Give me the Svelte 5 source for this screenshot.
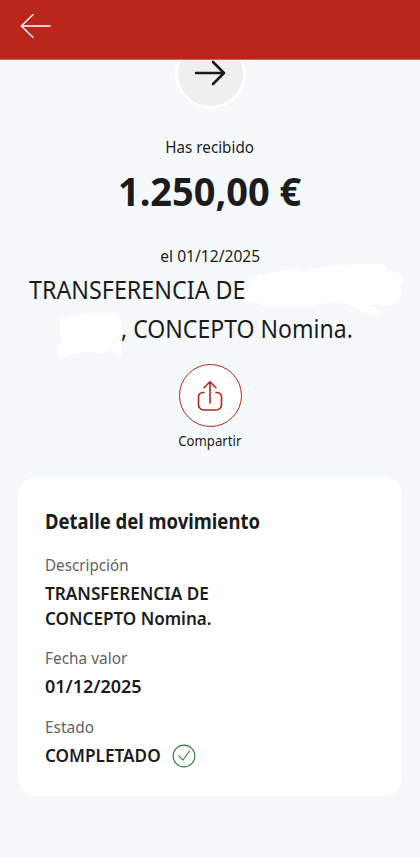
<script>
  const details = [
    { label: 'Descripción', labelScale: 0.95, lines: [{ text: 'TRANSFERENCIA DE', scale: 0.953 }, { text: 'CONCEPTO Nomina.', scale: 0.948 }] },
    { label: 'Fecha valor', labelScale: 0.963, lines: [{ text: '01/12/2025', scale: 0.998 }] },
    { label: 'Estado', labelScale: 0.963, lines: [{ text: 'COMPLETADO', scale: 0.953 }], done: true }
  ];
</script>

<div class="screen">
  <header>
    <button class="back" aria-label="Volver">
      <svg width="32" height="26" viewBox="0 0 32 26" fill="none" stroke="#fff" stroke-width="1.4" stroke-linecap="round" stroke-linejoin="round">
        <path d="M30 13H1.5M12.9 1.8 1.3 13l11.6 11.2" />
      </svg>
    </button>
  </header>

  <main>
    <div class="badge-clip">
      <div class="badge">
        <svg width="32" height="26" viewBox="0 0 32 26" fill="none" stroke="#1c1c1c" stroke-width="2.6" stroke-linecap="round" stroke-linejoin="round">
          <path d="M2 13h28M19 2 30 13 19 24" />
        </svg>
      </div>
    </div>

    <p class="small received"><span>Has recibido</span></p>
    <p class="amount"><span>1.250,00 €</span></p>
    <p class="small date"><span>el 01/12/2025</span></p>

    <div class="concept">
      <p class="first"><span>TRANSFERENCIA DE</span></p>
      <p class="second"><span>, CONCEPTO Nomina.</span></p>
      <svg class="scribble" width="420" height="100" viewBox="0 260 420 100" fill="#fff">
        <path d="M249 284Q251 278 256 279Q258 272 262 275C275 272 287 269 297 269Q300 273 310 270C330 265 350 264 382 264Q388 266 387 270Q399 271 403 278Q405 281 400 286Q403 294 400 299Q397 305 380 305L370 305Q378 310 383 312Q384 315 375 315Q362 313 356 308Q349 303 331 302Q316 304 312 307Q302 306 298 307C285 307 272 308 262 306Q260 302 249 302Q245 293 249 284Z" />
        <path d="M59 319Q63 315 66 318Q74 314 94 313Q111 312 117 315Q122 316 122 325L122 338Q122 350 121 355Q117 357 111 350Q104 354 96 353Q91 351 86 352L73 354Q64 359 58 357Q57 353 61 339Z" />
      </svg>
    </div>

    <button class="share">
      <i class="circle">
        <svg width="26" height="32" viewBox="0 0 26 32" fill="none" stroke="#b92419" stroke-width="1.6" stroke-linecap="round" stroke-linejoin="round">
          <path d="M13 23V2M7 7.7 13 1.7l6 6M7 12.5H6A4.8 4.8 0 0 0 1.5 17v7A5.5 5.5 0 0 0 7 30h12a5.5 5.5 0 0 0 5.5-6v-7A4.8 4.8 0 0 0 20 12.5h-1" />
        </svg>
      </i>
      <b><span>Compartir</span></b>
    </button>

    <section class="card">
      <h2><span>Detalle del movimiento</span></h2>
      {#each details as item}
        <div class="item">
          <p class="label"><span style:transform="scaleX({item.labelScale})">{item.label}</span></p>
          {#each item.lines as line}
            <p class="value"><span style:transform="scaleX({line.scale})">{line.text}</span></p>
          {/each}
          {#if item.done}
            <svg class="check" width="24" height="24" viewBox="0 0 24 24" fill="none" stroke="#32803f" stroke-width="1.1" stroke-linecap="round" stroke-linejoin="round">
              <circle cx="12" cy="12" r="10.9" />
              <path d="m6.8 11.8 4.2 4.4 6.3-9" />
            </svg>
          {/if}
        </div>
      {/each}
    </section>
  </main>
</div>

<style>
  :global(body) { margin: 0; background: #f5f9fc; }
  .screen {
    height: 857px;
    overflow: hidden;
    background: #f5f9fc;
    color: #1c1c1c;
    font-family: "Noto Sans", sans-serif;
  }
  header { height: 60px; background: #ba261b; border-bottom: 1px solid #cb655e; box-sizing: border-box; }
  button { border: 0; padding: 0; background: none; color: inherit; font-family: inherit; display: block; }
  .back { padding: 13px 0 0 20px; }
  svg { display: block; }
  p, h2 { margin: 0; white-space: nowrap; }
  span { display: inline-block; }
  main { display: flex; flex-direction: column; align-items: center; }
  .badge-clip { height: 49px; overflow: hidden; display: flex; align-items: flex-end; }
  .badge {
    width: 65px; height: 65px; flex: none;
    border: 3px solid #fff; border-radius: 50%; background: #efefef;
    display: grid; place-items: center;
  }
  .badge svg { margin-top: -1px; }
  .small { font-size: 16px; line-height: 24px; }
  .received { margin-top: 26px; }
  .received span { transform: scaleX(0.95); }
  .amount { margin-top: 7px; font-size: 40px; line-height: 50px; font-weight: 700; }
  .amount span { transform: scaleX(0.948); }
  .date { margin-top: 28px; }
  .date span { transform: scaleX(0.975); }
  .concept { position: relative; width: 420px; height: 78px; margin-top: 2px; font-size: 26px; line-height: 39px; }
  .concept p { position: relative; z-index: 1; }
  .concept span { transform-origin: left; transform: scaleX(0.896); }
  .first { padding-left: 28.5px; }
  .second { padding-left: 121px; }
  .concept .second span { transform: scaleX(0.887); }
  .scribble { position: absolute; top: -10px; left: 0; }
  .share { margin-top: 16px; }
  .circle {
    width: 61px; height: 61px; border: 1px solid #b92419; border-radius: 50%;
    background: #fff; display: grid; place-items: center; margin: 0 auto;
  }
  .share b { display: block; margin-top: 3px; font-size: 14.5px; font-weight: 400; line-height: 20px; }
  .share span { transform: scaleX(0.91); }
  .card {
    box-sizing: border-box; width: 384px; height: 319px; margin-top: 27px;
    padding: 29px 27px 0; border-radius: 18px; background: #fff;
  }
  .card span { transform-origin: left; }
  h2 { font-size: 21px; line-height: 30px; font-weight: 700; margin-bottom: 18px; }
  h2 span { transform: scaleX(0.88); }
  .item { position: relative; }
  .item + .item { margin-top: 17px; }
  .label { font-size: 16px; line-height: 22px; color: #626262; margin-bottom: 5px; }
  .value { font-size: 18px; line-height: 24.6px; font-weight: 600; }
  .check { position: absolute; left: 127px; top: 28px; }
</style>
